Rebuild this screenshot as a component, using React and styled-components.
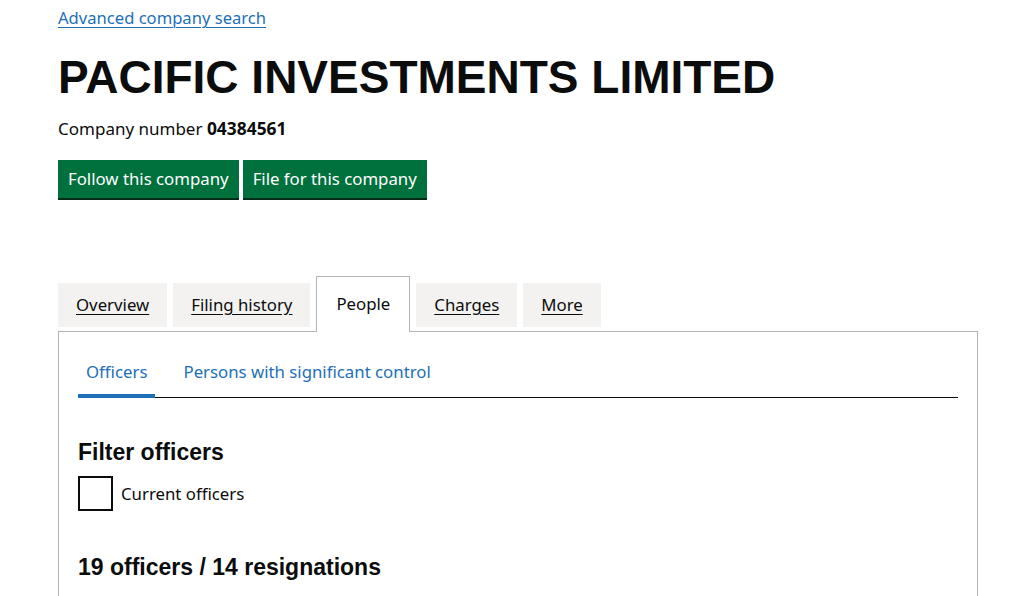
import React from 'react';
import styled, { createGlobalStyle } from 'styled-components';

const GlobalStyle = createGlobalStyle`
  body {
    margin: 0;
    background: #fff;
    color: #0b0c0c;
    font-family: "Noto Sans", "Liberation Sans", sans-serif;
  }
`;

const Page = styled.div`
  padding: 4px 46px 0 58px;
  width: 1024px;
  box-sizing: border-box;
`;

const BackLink = styled.a`
  display: inline-block;
  font-size: 16.6px;
  line-height: 28px;
  color: #1d70b8;
  text-decoration: underline;
  text-underline-offset: 3px;
  text-decoration-thickness: 1px;
`;

const Title = styled.h1`
  margin: 18px 0 0;
  font-family: "Liberation Sans", Arial, sans-serif;
  font-weight: 700;
  font-size: 46px;
  line-height: 54px;
`;

const CompanyNumber = styled.p`
  margin: 12px 0 0;
  font-size: 17px;
  line-height: 24px;
  strong {
    font-weight: 700;
    font-size: 17.4px;
  }
`;

const Actions = styled.div`
  display: flex;
  gap: 4px;
  margin-top: 19px;
`;

const Button = styled.button`
  font-family: "Noto Sans", "Liberation Sans", sans-serif;
  font-size: 16.8px;
  line-height: 20px;
  color: #fff;
  background: #00703c;
  border: 0;
  box-shadow: 0 2px 0 #002d18;
  padding: 9px 10px 9px;
  height: 38px;
  cursor: pointer;
`;

const TabList = styled.div`
  display: flex;
  align-items: flex-end;
  gap: 6px;
  margin-top: 78px;
`;

const Tab = styled.a`
  display: block;
  font-size: 16.8px;
  line-height: 24px;
  color: #0b0c0c;
  background: ${p => (p.active ? '#fff' : '#f3f2f1')};
  text-decoration: ${p => (p.active ? 'none' : 'underline')};
  text-underline-offset: 3px;
  padding: ${p => (p.active ? '15px 19px 16px' : '10px 18px 10px')};
  border: ${p => (p.active ? '1px solid #b1b4b6' : '0')};
  border-bottom: 0;
  margin: ${p => (p.active ? '0 0 -1px' : '0 0 4px')};
  position: relative;
  z-index: ${p => (p.active ? 1 : 0)};
`;

const Panel = styled.div`
  border: 1px solid #b1b4b6;
  padding: 24px 19px 20px;
  height: 300px;
`;

const SubTabs = styled.div`
  display: flex;
  gap: 20px;
  border-bottom: 1px solid #0b0c0c;
`;

const SubTab = styled.a`
  font-size: 16.8px;
  line-height: 24px;
  color: #1d70b8;
  padding: 4px 8px 10px;
  border-bottom: 4px solid ${p => (p.active ? '#1d70b8' : 'transparent')};
  margin-bottom: -1px;
`;

const SectionHeading = styled.h2`
  margin: 0;
  font-family: "Liberation Sans", Arial, sans-serif;
  font-weight: 700;
  font-size: 23px;
  line-height: 28px;
`;

const Filter = styled.div`
  margin-top: 40px;
`;

const CheckRow = styled.label`
  display: flex;
  align-items: center;
  gap: 8px;
  margin-top: 10px;
  font-size: 16.8px;
`;

const Box = styled.span`
  width: 31px;
  height: 31px;
  border: 2px solid #0b0c0c;
  display: inline-block;
`;

const Count = styled(SectionHeading)`
  margin-top: 42px;
`;

export default function App() {
  return (
    <>
      <GlobalStyle />
      <Page>
        <BackLink href="#">Advanced company search</BackLink>
        <Title>PACIFIC INVESTMENTS LIMITED</Title>
        <CompanyNumber>
          Company number <strong>04384561</strong>
        </CompanyNumber>
        <Actions>
          <Button>Follow this company</Button>
          <Button>File for this company</Button>
        </Actions>
        <TabList>
          <Tab href="#">Overview</Tab>
          <Tab href="#">Filing history</Tab>
          <Tab active>People</Tab>
          <Tab href="#">Charges</Tab>
          <Tab href="#">More</Tab>
        </TabList>
        <Panel>
          <SubTabs>
            <SubTab active>Officers</SubTab>
            <SubTab>Persons with significant control</SubTab>
          </SubTabs>
          <Filter>
            <SectionHeading>Filter officers</SectionHeading>
            <CheckRow>
              <Box />
              Current officers
            </CheckRow>
          </Filter>
          <Count>19 officers / 14 resignations</Count>
        </Panel>
      </Page>
    </>
  );
}
